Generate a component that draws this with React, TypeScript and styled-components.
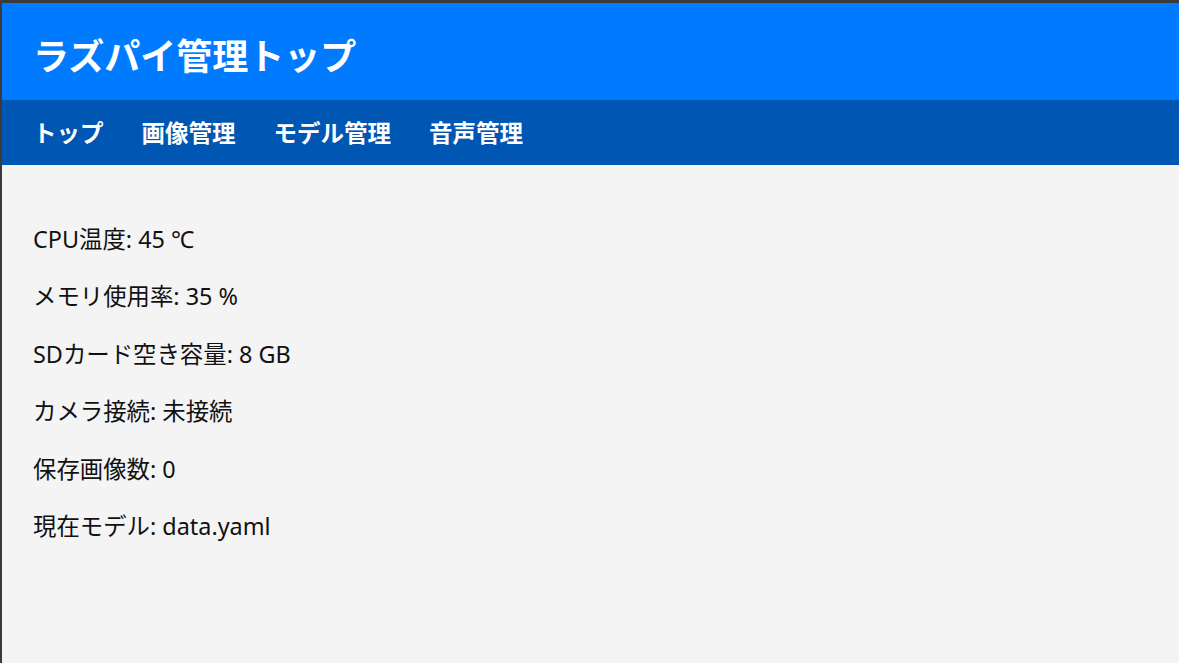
import React from 'react'
import styled, { createGlobalStyle } from 'styled-components'

const GlobalStyle = createGlobalStyle`
  html, body {
    margin: 0;
    padding: 0;
    height: 100%;
  }
  body {
    background: #f4f4f4;
    font-family: 'Noto Sans', 'Noto Sans CJK JP', sans-serif;
    color: #111;
  }
  #root {
    height: 100%;
  }
`

const Frame = styled.div`
  height: 100%;
  box-sizing: border-box;
  border-top: 3px solid #3b3b3b;
  border-left: 2px solid #3b3b3b;
  display: flex;
  flex-direction: column;
  background: #f4f4f4;
`

const Header = styled.header`
  background: #007bff;
  color: #fff;
  height: 97px;
  box-sizing: border-box;
  display: flex;
  align-items: center;
  padding: 4px 31px 0;

  h1 {
    margin: 0;
    font-size: 36px;
    font-weight: 700;
    line-height: 1;
    font-family: 'Noto Sans CJK JP', sans-serif;
  }
`

const Nav = styled.nav`
  background: #0056b3;
  height: 65px;
  display: flex;
  align-items: center;
  gap: 38px;
  padding: 0 31px;
`

const NavLink = styled.a`
  color: #fff;
  text-decoration: none;
  font-size: 23.5px;
  font-weight: 700;
  line-height: 1;
  font-family: 'Noto Sans CJK JP', sans-serif;
`

const Main = styled.main`
  padding: 57px 31px 0;
  display: flex;
  flex-direction: column;
  gap: 23.4px;
`

const Stat = styled.p`
  margin: 0;
  font-size: 23.4px;
  line-height: 34px;
`

const stats = [
  'CPU温度: 45 ℃',
  'メモリ使用率: 35 %',
  'SDカード空き容量: 8 GB',
  'カメラ接続: 未接続',
  '保存画像数: 0',
  '現在モデル: data.yaml',
]

const App = () => {
  return (
    <Frame>
      <GlobalStyle />
      <Header>
        <h1>ラズパイ管理トップ</h1>
      </Header>
      <Nav>
        <NavLink href='#'>トップ</NavLink>
        <NavLink href='#'>画像管理</NavLink>
        <NavLink href='#'>モデル管理</NavLink>
        <NavLink href='#'>音声管理</NavLink>
      </Nav>
      <Main>
        {stats.map((s) => (
          <Stat key={s}>{s}</Stat>
        ))}
      </Main>
    </Frame>
  )
}

export default App
